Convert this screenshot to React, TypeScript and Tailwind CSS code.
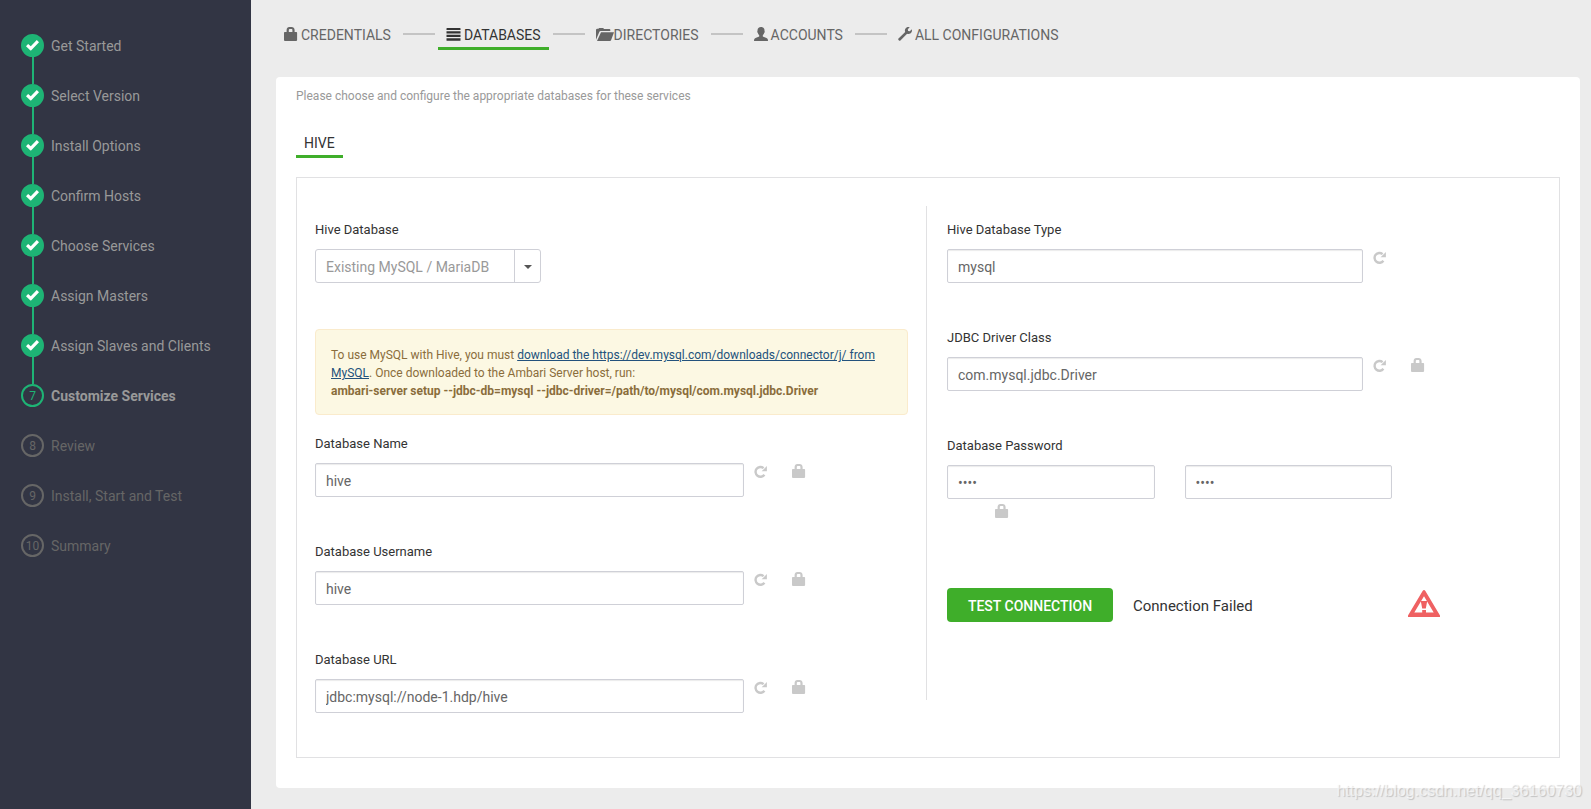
import { useState } from "react";
import type { ReactNode } from "react";

const steps = [
  "Get Started",
  "Select Version",
  "Install Options",
  "Confirm Hosts",
  "Choose Services",
  "Assign Masters",
  "Assign Slaves and Clients",
  "Customize Services",
  "Review",
  "Install, Start and Test",
  "Summary"
];

const currentStep = 7;

function LockIcon() {
  return (
    <svg width="14" height="14" viewBox="0 0 14 14" fill="currentColor" aria-hidden="true">
      <path
        fillRule="evenodd"
        d="M.8 5H2.600V3C2.600 1 3.900 0 5.200 0h2.400C9.200 0 10.600 1 10.600 3v2h1.800c.4 0 .7.3.7.7v7.400c0 .5-.4.9-.9.9H.9c-.5 0-.9-.4-.9-.9V5.800C0 5.400.3 5 .8 5ZM4.800 5h3.600V3c0-.6-.4-1-.9-1H5.700c-.5 0-.9.4-.9 1Z"
      />
    </svg>
  );
}

function ListIcon() {
  return (
    <svg width="15" height="14" viewBox="0 0 15 14" fill="currentColor" aria-hidden="true">
      <path d="M1 1h13q.5 0 .5.5v1.600H.5V1.500Q.5 1 1 1ZM.5 4.300h14v2.300H.5ZM.5 7.800h14v2.300H.5ZM.5 11.300h14v2q0 .5-.5.5H1q-.5 0-.5-.5Z" />
    </svg>
  );
}

function FolderIcon() {
  return (
    <svg width="18" height="14" viewBox="0 0 18 14" fill="currentColor" aria-hidden="true">
      <path d="M0 12.800V2.600L1 1.800h1.400l.8-.8h4l.8 1h5.500q.8 0 .8.8V4H4.600q-.8 0-1.200.8Z" />
      <path d="M5 5.200h13L15 13.300q-.3.700-1 .700H1Z" />
    </svg>
  );
}

function UserIcon() {
  return (
    <svg width="14" height="14" viewBox="0 0 14 14" fill="currentColor" aria-hidden="true">
      <path d="M7 0C9.200 0 10.500 1.400 10.500 3.400c0 .6.1.9.3 1.300-.1.800-.4 1.100-.7 1.300-.2 1.100-.8 1.700-1.300 2.200v1.300c1.400.8 3.500 1.300 4.700 2.200.4.4.5 1.200.5 2.300H0c0-1.100.1-1.900.5-2.300 1.200-.9 3.300-1.400 4.700-2.200V8.200C4.700 7.700 4.100 7.100 3.900 6c-.3-.2-.6-.5-.7-1.300.2-.4.3-.7.3-1.300C3.500 1.400 4.800 0 7 0Z" />
    </svg>
  );
}

function WrenchIcon() {
  return (
    <svg width="14" height="14" viewBox="0 0 14 14" fill="currentColor" aria-hidden="true">
      <path d="M11.700.2 9.800 2.200l.3 1.700 1.700.3 2-1.900c.5 2-.2 3.500-1.500 4.300-1 .6-2.200.6-3.200.2l-6.700 6.700c-.4.400-1 .4-1.400 0l-.5-.5c-.4-.4-.4-1 0-1.400l6.700-6.700c-.5-1-.4-2.300.2-3.200C8.300.2 9.800-.3 11.700.2Z" />
    </svg>
  );
}

function RepeatIcon() {
  return (
    <svg width="14" height="14" viewBox="0 0 14 14" aria-hidden="true">
      <path d="M10.400 9.800A4.900 4.900 0 1 1 9.600 3.100" fill="none" stroke="currentColor" strokeWidth="2.400" />
      <path d="M12.900 1v5.300H7.600Z" fill="currentColor" />
    </svg>
  );
}

function CheckIcon() {
  return (
    <svg width="13" height="11" viewBox="0 0 13 11" aria-hidden="true">
      <path d="M10.800 0 13 2.200 5.300 10.200q-.6.500-1.100 0L0 6.200 2.100 4l2.700 2.200Z" fill="#fff" />
    </svg>
  );
}

function WarningIcon() {
  return (
    <svg width="32" height="27" viewBox="0 0 32 27" role="img" aria-label="Warning">
      <path
        fillRule="evenodd"
        fill="#ef6162"
        d="M14.600 1q1.400-1.800 2.800 0L32 25.600V27H0v-1.400ZM16 6.200 6.300 22.500h19.400Z"
      />
      <path d="M12.800 11h6.400l-1.400 7.500h-3.600ZM14.200 20h3.800v3h-3.800Z" fill="#ef6162" />
    </svg>
  );
}

const tabs: { label: string; icon: ReactNode; tight?: boolean }[] = [
  { label: "Credentials", icon: <LockIcon /> },
  { label: "Databases", icon: <ListIcon /> },
  { label: "Directories", icon: <FolderIcon />, tight: true },
  { label: "Accounts", icon: <UserIcon /> },
  { label: "All Configurations", icon: <WrenchIcon /> }
];

const labelClass = "mb-[9px] block text-[13px] leading-5 text-[#333]";

const inputClass =
  "h-[34px] rounded-[2px] border border-[#cfd0d7] bg-white px-[10px] pt-[2px] text-sm text-[#666] shadow-[inset_0_1px_1px_rgba(0,0,0,0.08)] outline-none";

function Sidebar() {
  return (
    <aside className="w-[251px] shrink-0 bg-[#323544] pt-[34px] pl-[21px]">
      <ol>
        {steps.map((label, index) => {
          const done = index < currentStep;
          const current = index === currentStep;
          return (
            <li key={label} className="flex h-[50px] gap-[7px]">
              <div className="flex flex-col items-center">
                <span
                  className={`flex size-[23px] shrink-0 items-center justify-center rounded-full border-2 text-xs ${
                    done
                      ? "border-[#1eb475] bg-[#1eb475]"
                      : current
                        ? "border-[#1eb475] text-[#1eb475]"
                        : "border-[#666] text-[#666]"
                  }`}
                >
                  {done ? <CheckIcon /> : index}
                </span>
                {done && <span className="w-[2px] grow bg-[#1eb475]" />}
              </div>
              <a
                href="#"
                className={`h-6 text-sm leading-6 ${
                  current ? "font-bold text-[#999]" : done ? "text-[#999]" : "text-[#666]"
                }`}
              >
                {label}
              </a>
            </li>
          );
        })}
      </ol>
    </aside>
  );
}

function TabBar() {
  return (
    <nav className="flex h-[52px] items-start gap-1">
      {tabs.map((tab, index) => {
        const active = tab.label === "Databases";
        return (
          <div key={tab.label} className="flex items-start gap-[3px]">
            {index > 0 && <span className="mt-2 h-[2px] w-8 bg-[#c4c4c4]" />}
            <a
              href="#"
              className={`flex items-start border-b-[3px] px-2 pb-[2px] text-sm leading-5 uppercase ${
                tab.tight ? "" : "gap-[3px]"
              } ${active ? "border-[#3fae2a] text-[#333]" : "border-transparent text-[#666]"}`}
            >
              <span className="mt-[2px]">{tab.icon}</span>
              {tab.label}
            </a>
          </div>
        );
      })}
    </nav>
  );
}

function Field({
  id,
  label,
  value,
  actionsWidth,
  lock = true
}: {
  id: string;
  label: string;
  value: string;
  actionsWidth: string;
  lock?: boolean;
}) {
  const [text, setText] = useState(value);

  return (
    <div>
      <label htmlFor={id} className={labelClass}>
        {label}
      </label>
      <div className="flex items-start">
        <input
          id={id}
          type="text"
          value={text}
          onChange={(e) => setText(e.target.value)}
          className={`${inputClass} min-w-0 grow`}
        />
        <div className={`flex shrink-0 gap-6 pt-px pl-[10px] text-[#c9c9c9] ${actionsWidth}`}>
          <button type="button" aria-label={`Reset ${label}`} className="pt-px">
            <RepeatIcon />
          </button>
          {lock && (
            <button type="button" aria-label={`Lock ${label}`} className="pb-px">
              <LockIcon />
            </button>
          )}
        </div>
      </div>
    </div>
  );
}

export default function App() {
  return (
    <div className="relative flex min-h-screen bg-[#ececec] font-[Roboto,sans-serif] text-[#333]">
      <Sidebar />

      <main className="min-w-0 grow pt-[25px] pr-[11px] pb-5 pl-[25px]">
        <TabBar />

        <section className="rounded bg-white px-5 pt-[9px] pb-[30px]">
          <p className="text-xs leading-5 text-[#999]">
            Please choose and configure the appropriate databases for these services
          </p>
          <a
            href="#"
            className="mt-[27px] inline-block border-b-[3px] border-[#3fae2a] px-2 pb-[2px] align-top text-sm leading-5"
          >
            HIVE
          </a>

          <form className="mt-[19px] grid grid-cols-2 items-start border border-[#e1e1e3] pt-7 pr-1 pb-11">
            <div className="px-[18px] pt-[14px]">
              <label htmlFor="hive-database" className={labelClass}>
                Hive Database
              </label>
              <div className="relative mb-[46px] w-[226px]">
                <select
                  id="hive-database"
                  className="h-[34px] w-full appearance-none rounded-[3px] border border-[#cfd0d7] bg-white px-[10px] pt-[2px] text-sm text-[#999] outline-none"
                >
                  <option>Existing MySQL / MariaDB</option>
                  <option>Existing PostgreSQL</option>
                  <option>Existing Oracle</option>
                </select>
                <span className="pointer-events-none absolute inset-y-0 right-0 flex w-[27px] items-center justify-center border-l border-[#cfd0d7] pt-[2px] text-[#555]">
                  <svg width="8" height="4" viewBox="0 0 8 4" aria-hidden="true">
                    <path d="M0 0h8L4 4Z" fill="currentColor" />
                  </svg>
                </span>
              </div>

              <div className="mb-[19px] rounded border border-[#faebcc] bg-[#fcf8e3] px-[15px] pt-4 pb-[14px] text-xs leading-[18px] text-[#8a6d3b]">
                To use MySQL with Hive, you must{" "}
                <a href="#" className="text-[#23527c] underline">
                  download the https://dev.mysql.com/downloads/connector/j/ from MySQL
                </a>
                . Once downloaded to the Ambari Server host, run:
                <br />
                <b>
                  ambari-server setup --jdbc-db=mysql --jdbc-driver=/path/to/mysql/com.mysql.jdbc.Driver
                </b>
              </div>

              <div className="grid gap-[45px]">
                <Field id="db-name" label="Database Name" value="hive" actionsWidth="w-[164px]" />
                <Field id="db-user" label="Database Username" value="hive" actionsWidth="w-[164px]" />
                <Field
                  id="db-url"
                  label="Database URL"
                  value="jdbc:mysql://node-1.hdp/hive"
                  actionsWidth="w-[164px]"
                />
              </div>
            </div>

            <div className="grid gap-[45px] border-l border-[#e1e1e3] pt-[14px] pr-[14px] pb-[76px] pl-5">
              <Field
                id="db-type"
                label="Hive Database Type"
                value="mysql"
                actionsWidth="w-[178px]"
                lock={false}
              />
              <Field
                id="jdbc-class"
                label="JDBC Driver Class"
                value="com.mysql.jdbc.Driver"
                actionsWidth="w-[178px]"
              />

              <div>
                <label htmlFor="db-password" className={labelClass}>
                  Database Password
                </label>
                <div className="flex gap-[5%]">
                  <input
                    id="db-password"
                    type="password"
                    defaultValue="hive"
                    className={`${inputClass} w-[35%]`}
                  />
                  <input
                    type="password"
                    aria-label="Confirm database password"
                    defaultValue="hive"
                    className={`${inputClass} w-[35%]`}
                  />
                </div>
                <button
                  type="button"
                  aria-label="Lock Database Password"
                  className="mt-[5px] ml-12 block text-[#c9c9c9]"
                >
                  <LockIcon />
                </button>

                <div className="mt-[70px] flex items-start">
                  <button
                    type="button"
                    className="h-[34px] w-[166px] rounded bg-[#3fae2a] pt-[2px] text-sm font-medium text-white"
                  >
                    TEST CONNECTION
                  </button>
                  <span className="ml-5 w-[275px] text-[15px] leading-9">Connection Failed</span>
                  <span className="pt-[2px]">
                    <WarningIcon />
                  </span>
                </div>
              </div>
            </div>
          </form>
        </section>
      </main>

      <span className="pointer-events-none absolute right-[9px] bottom-[8px] font-['Liberation_Sans',sans-serif] text-base leading-5 text-white/60 [text-shadow:1px_1px_1px_rgba(0,0,0,0.18)]">
        https://blog.csdn.net/qq_36160730
      </span>
    </div>
  );
}
